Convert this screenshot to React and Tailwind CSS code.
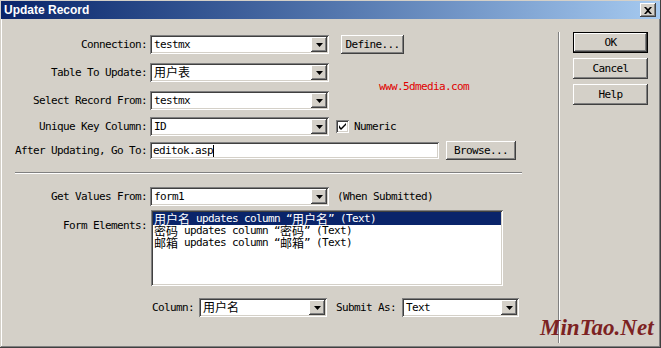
const F = "font-['DejaVu_Sans_Mono','Noto_Sans_CJK_SC',monospace] text-[11px] tracking-[-0.62px] text-black leading-[12px]";
const RAISED = "bg-[#d4d0c8] shadow-[inset_-1px_-1px_#404040,inset_1px_1px_#ffffff,inset_-2px_-2px_#808080,inset_2px_2px_#d4d0c8]";
const SUNKEN = "bg-white shadow-[inset_1px_1px_#808080,inset_-1px_-1px_#ffffff,inset_2px_2px_#404040,inset_-2px_-2px_#d4d0c8]";

const Zh = ({ children }) => (
  <span className="font-['Noto_Sans_CJK_SC',sans-serif] text-[12px] leading-[12px] tracking-normal">{children}</span>
);

const DownArrow = () => (
  <svg width="7" height="4" viewBox="0 0 7 4">
    <path d="M0 0h7L3.5 4z" fill="#000" />
  </svg>
);

const Combo = ({ className, children }) => (
  <div className={`${SUNKEN} ${className} h-[19px] flex items-center p-[2px]`}>
    <span className={`${F} flex-1 pl-[2px] whitespace-nowrap`}>{children}</span>
    <span className={`${RAISED} w-[16px] h-[15px] flex items-center justify-center`}>
      <DownArrow />
    </span>
  </div>
);

const Btn = ({ className, children }) => (
  <div className={`${RAISED} ${className} ${F} flex items-center justify-center`}>{children}</div>
);

const Row = ({ label, className, children }) => (
  <div className={`flex items-center h-[19px] ${className}`}>
    <span className={`${F} w-[147px] text-right whitespace-nowrap`}>{label}</span>
    <div className="ml-[3px] flex items-center">{children}</div>
  </div>
);

const ListRow = ({ name, active }) => (
  <div
    className={`${F} flex items-center pl-[1px] whitespace-nowrap ${
      active ? 'h-[13px] bg-[#0a246a] text-white' : 'h-[12px]'
    }`}
  >
    <Zh>{name}</Zh>&nbsp;updates column “<Zh>{name}</Zh>” (Text)
  </div>
);

export default function App() {
  return (
    <div className="relative w-[661px] h-[348px] overflow-hidden bg-[#d4d0c8] shadow-[inset_-1px_-1px_#404040,inset_1px_1px_#d4d0c8,inset_-2px_-2px_#808080,inset_2px_2px_#ffffff]">
      {/* Title bar */}
      <div className="mx-[1px] mt-[1px] h-[18px] flex items-center justify-between pl-[3px] pr-[4px] bg-linear-to-r from-[#0a246a] to-[#a6caf0]">
        <span className="text-white font-bold text-[12px] font-['Liberation_Sans',Arial,sans-serif]">Update Record</span>
        <div className={`${RAISED} w-[16px] h-[14px] flex items-center justify-center`}>
          <svg width="8" height="7" viewBox="0 0 8 7">
            <path d="M0 0h2l2 2 2-2h2L5 3.5 8 7H6L4 5 2 7H0l3-3.5z" fill="#000" />
          </svg>
        </div>
      </div>

      <div className="flex">
        {/* Left panel */}
        <div className="w-[558px] flex flex-col pt-[16px]">
          <Row label="Connection:">
            <Combo className="w-[179px]">testmx</Combo>
            <Btn className="ml-[12px] w-[63px] h-[19px]">Define...</Btn>
          </Row>
          <Row label="Table To Update:" className="mt-[9px]">
            <Combo className="w-[179px]"><Zh>用户表</Zh></Combo>
          </Row>
          <Row label="Select Record From:" className="mt-[9px]">
            <Combo className="w-[179px]">testmx</Combo>
          </Row>
          <Row label="Unique Key Column:" className="mt-[7px]">
            <Combo className="w-[179px]">ID</Combo>
            <div className={`${SUNKEN} ml-[7px] w-[13px] h-[13px] flex items-center justify-center`}>
              <svg width="7" height="7" viewBox="0 0 7 7">
                <path d="M0 2v3l2 2 5-5V0L2 5z" fill="#000" />
              </svg>
            </div>
            <span className={`${F} ml-[5px]`}>Numeric</span>
          </Row>
          <Row label="After Updating, Go To:" className="mt-[5px]">
            <div className={`${SUNKEN} w-[289px] h-[17px] flex items-center pl-[3px]`}>
              <span className={F}>editok.asp</span>
              <span className="w-[1px] h-[12px] bg-black" />
            </div>
            <Btn className="ml-[7px] w-[70px] h-[19px]">Browse...</Btn>
          </Row>

          <div className="ml-[15px] mt-[12px] w-[507px] border-t border-t-[#808080] border-b border-b-white" />

          <Row label="Get Values From:" className="mt-[13px]">
            <Combo className="w-[179px]">form1</Combo>
            <span className={`${F} ml-[8px]`}>(When Submitted)</span>
          </Row>

          <div className="flex mt-[4px]">
            <span className={`${F} w-[147px] text-right mt-[10px]`}>Form Elements:</span>
            <div className={`${SUNKEN} ml-[4px] w-[352px] h-[76px] p-[2px] flex flex-col`}>
              <ListRow name="用户名" active />
              <ListRow name="密码" />
              <ListRow name="邮箱" />
            </div>
          </div>

          <div className="flex items-center h-[19px] mt-[12px] ml-[152px]">
            <span className={F}>Column:</span>
            <Combo className="ml-[5px] w-[128px]"><Zh>用户名</Zh></Combo>
            <span className={`${F} ml-[9px]`}>Submit As:</span>
            <Combo className="ml-[6px] w-[117px]">Text</Combo>
          </div>
        </div>

        {/* Separator */}
        <div className="mt-[13px] h-[311px] w-[2px] border-l border-l-[#808080] border-r border-r-white" />

        {/* Right buttons */}
        <div className="pl-[13px] pt-[13px] flex flex-col gap-[5px]">
          <div className="w-[75px] h-[21px] border border-black">
            <Btn className="w-full h-full">OK</Btn>
          </div>
          <Btn className="w-[75px] h-[21px]">Cancel</Btn>
          <Btn className="w-[75px] h-[21px]">Help</Btn>
        </div>
      </div>

      {/* Watermarks */}
      <span className="absolute left-[379px] top-[81px] font-['DejaVu_Sans_Mono',monospace] text-[11px] tracking-[-0.62px] leading-[12px] text-[#e00000]">
        www.5dmedia.com
      </span>
      <span className="absolute left-[540px] top-[314px] font-['Liberation_Serif',serif] italic font-bold text-[23px] leading-[28px] text-[#7c2222]">
        MinTao.Net
      </span>
    </div>
  );
}
